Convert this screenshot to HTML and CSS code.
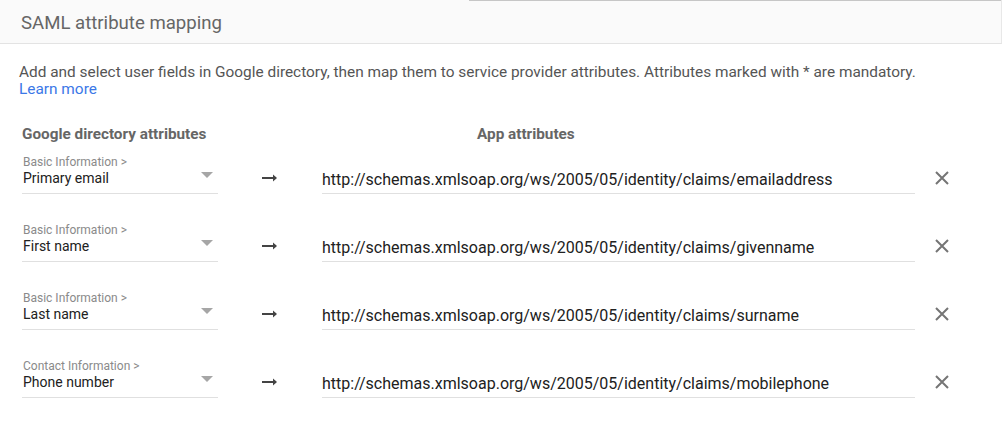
FILE: index.html
```html
<!DOCTYPE html>
<html>
<head>
<meta charset="utf-8">
<link rel="stylesheet" href="styles.css">
</head>
<body>
<div class="header">
  <h1 class="title">SAML attribute mapping</h1>
</div>
<div class="content">
  <p class="desc">Add and select user fields in Google directory, then map them to service provider attributes. Attributes marked with * are mandatory.<br><a class="link" href="#">Learn more</a></p>
  <div class="grid">
    <div class="colhead">Google directory attributes</div>
    <div></div>
    <div class="colhead app">App attributes</div>
    <div></div>

    <div class="select"><div class="cat">Basic Information &gt;</div><div class="val">Primary email</div><span class="tri"></span></div>
    <div class="arrow"><svg width="16" height="8" viewBox="0 0 16 8"><path d="M0 4h12" stroke="#444" stroke-width="2"/><path d="M11 0.5l4 3.5-4 3.5z" fill="#444"/></svg></div>
    <div class="input">http://schemas.xmlsoap.org/ws/2005/05/identity/claims/emailaddress</div>
    <div class="close"><svg width="14" height="14" viewBox="0 0 14 14"><path d="M1 1L13 13M13 1L1 13" stroke="#757575" stroke-width="2"/></svg></div>

    <div class="select"><div class="cat">Basic Information &gt;</div><div class="val">First name</div><span class="tri"></span></div>
    <div class="arrow"><svg width="16" height="8" viewBox="0 0 16 8"><path d="M0 4h12" stroke="#444" stroke-width="2"/><path d="M11 0.5l4 3.5-4 3.5z" fill="#444"/></svg></div>
    <div class="input">http://schemas.xmlsoap.org/ws/2005/05/identity/claims/givenname</div>
    <div class="close"><svg width="14" height="14" viewBox="0 0 14 14"><path d="M1 1L13 13M13 1L1 13" stroke="#757575" stroke-width="2"/></svg></div>

    <div class="select"><div class="cat">Basic Information &gt;</div><div class="val">Last name</div><span class="tri"></span></div>
    <div class="arrow"><svg width="16" height="8" viewBox="0 0 16 8"><path d="M0 4h12" stroke="#444" stroke-width="2"/><path d="M11 0.5l4 3.5-4 3.5z" fill="#444"/></svg></div>
    <div class="input">http://schemas.xmlsoap.org/ws/2005/05/identity/claims/surname</div>
    <div class="close"><svg width="14" height="14" viewBox="0 0 14 14"><path d="M1 1L13 13M13 1L1 13" stroke="#757575" stroke-width="2"/></svg></div>

    <div class="select"><div class="cat">Contact Information &gt;</div><div class="val">Phone number</div><span class="tri"></span></div>
    <div class="arrow"><svg width="16" height="8" viewBox="0 0 16 8"><path d="M0 4h12" stroke="#444" stroke-width="2"/><path d="M11 0.5l4 3.5-4 3.5z" fill="#444"/></svg></div>
    <div class="input">http://schemas.xmlsoap.org/ws/2005/05/identity/claims/mobilephone</div>
    <div class="close"><svg width="14" height="14" viewBox="0 0 14 14"><path d="M1 1L13 13M13 1L1 13" stroke="#757575" stroke-width="2"/></svg></div>
  </div>
</div>
</body>
</html>
```
FILE: styles.css
```css
html, body {
  margin: 0;
  padding: 0;
  background: #fff;
  font-family: Roboto, "Liberation Sans", Arial, sans-serif;
}
.header {
  position: relative;
  height: 44px;
  background: #fafafa;
  border-bottom: 1px solid #e3e3e3;
  border-right: 1px solid #e8e8e8;
  box-sizing: border-box;
  display: flex;
  align-items: center;
  padding-left: 21px;
}
.header::before {
  content: "";
  position: absolute;
  left: 469px;
  right: 0;
  top: 0;
  height: 1px;
  background: #c6c6c6;
}
.title {
  margin: 0;
  font-size: 18.6px;
  font-weight: 400;
  color: #666;
  padding-top: 2px;
}
.content {
  padding: 20px 0 0 19px;
}
.desc {
  margin: 0;
  font-size: 15.4px;
  line-height: 17px;
  color: #555;
}
.link {
  color: #3b78e7;
  text-decoration: none;
}
.grid {
  display: grid;
  grid-template-columns: 196px 104px 593px 40px;
  margin-top: 28px;
  margin-left: 3px;
}
.colhead {
  font-size: 15.3px;
  font-weight: 700;
  color: #666;
  height: 17px;
  line-height: 17px;
  margin-bottom: 11px;
}
.colhead.app {
  margin-left: 155px;
}
.select {
  position: relative;
  height: 39px;
  border-bottom: 1px solid #e0e0e0;
  margin-bottom: 28px;
  padding-left: 1px;
}
.cat {
  font-size: 12px;
  line-height: 16px;
  color: #8a8a8a;
}
.val {
  font-size: 14px;
  line-height: 17px;
  color: #212121;
}
.tri {
  position: absolute;
  right: 5px;
  top: 18px;
  width: 0;
  height: 0;
  border-left: 6px solid transparent;
  border-right: 6px solid transparent;
  border-top: 6px solid #a6a6a6;
}
.arrow {
  height: 40px;
  display: flex;
  align-items: flex-end;
  padding-left: 44px;
  padding-bottom: 12px;
  box-sizing: border-box;
}
.arrow svg { display: block; }
.input {
  height: 40px;
  box-sizing: border-box;
  border-bottom: 1px solid #e0e0e0;
  font-size: 16px;
  line-height: 19px;
  color: #212121;
  padding-top: 16px;
}
.close {
  height: 40px;
  display: flex;
  align-items: flex-end;
  padding-left: 20px;
  padding-bottom: 9px;
  box-sizing: border-box;
}
.close svg { display: block; }
```
